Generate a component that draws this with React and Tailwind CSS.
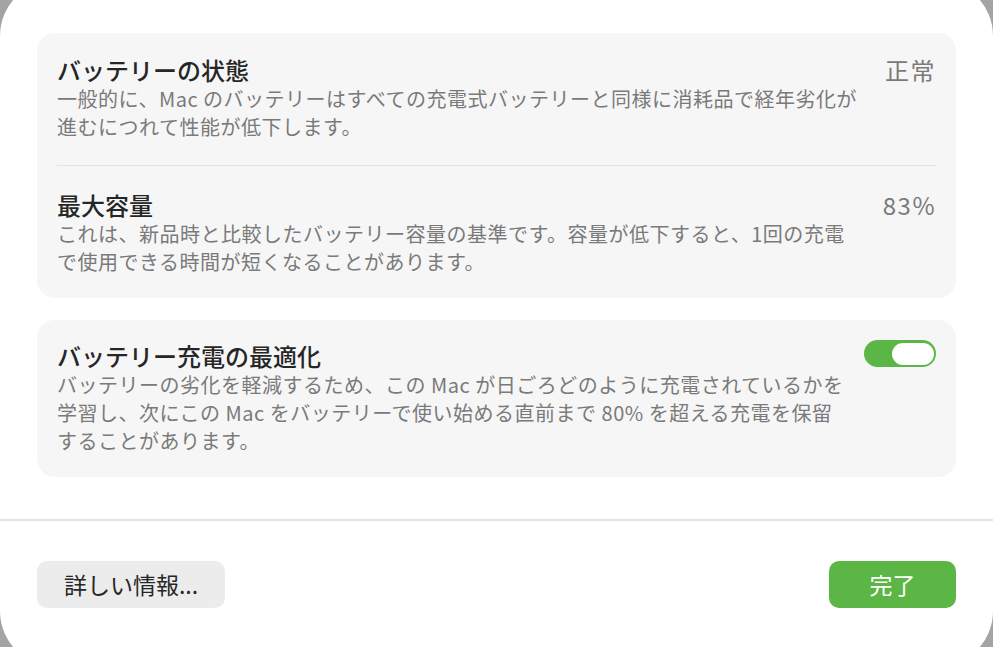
const font = { fontFamily: '"Noto Sans CJK JP", "Noto Sans", sans-serif' };

function Row({ title, value, lines, children }) {
  return (
    <div className="flex items-start justify-between">
      <div>
        <div className="text-[24px] leading-[30px] font-medium text-[#262626]">{title}</div>
        <div className="text-[20px] leading-[28px] tracking-[0.5px] text-[#7a7a7a] whitespace-nowrap">
          {lines.map((l, i) => (
            <div key={i}>{l}</div>
          ))}
        </div>
      </div>
      {value && <div className="text-[24px] leading-[30px] tracking-[1.5px] text-[#7a7a7a]">{value}</div>}
      {children}
    </div>
  );
}

function Toggle() {
  return (
    <div className="mt-[-1px] flex h-[27px] w-[72px] items-center justify-end rounded-full bg-[#5bb645] px-[2px]">
      <div className="h-[22px] w-[42px] rounded-full bg-white"></div>
    </div>
  );
}

export default function App() {
  return (
    <div className="h-[647px] w-[993px] overflow-hidden bg-[#a4a4a4]" style={font}>
      <div className="-mt-5 flex h-[687px] w-[993px] flex-col rounded-[56px] bg-white pt-[53px]">
        <div className="px-[37px]">
          {/* battery status */}
          <div className="rounded-[18px] bg-[#f6f6f6] px-5 pt-[22px] pb-[22px]">
            <Row
              title="バッテリーの状態"
              value="正常"
              lines={[
                '一般的に、Mac のバッテリーはすべての充電式バッテリーと同様に消耗品で経年劣化が',
                '進むにつれて性能が低下します。',
              ]}
            />
            <div className="mt-6 mb-6 h-px bg-[#e4e4e4]"></div>
            <Row
              title="最大容量"
              value="83%"
              lines={[
                'これは、新品時と比較したバッテリー容量の基準です。容量が低下すると、1回の充電',
                'で使用できる時間が短くなることがあります。',
              ]}
            />
          </div>

          {/* optimized charging */}
          <div className="mt-[22px] rounded-[18px] bg-[#f6f6f6] px-5 pt-[21px] pb-[22px]">
            <Row
              title="バッテリー充電の最適化"
              lines={[
                'バッテリーの劣化を軽減するため、この Mac が日ごろどのように充電されているかを',
                '学習し、次にこの Mac をバッテリーで使い始める直前まで 80% を超える充電を保留',
                'することがあります。',
              ]}
            >
              <Toggle />
            </Row>
          </div>
        </div>

        <div className="mt-[42px] h-[2px] bg-[#e2e2e2]"></div>

        <div className="mt-10 flex justify-between px-[37px]">
          <button className="h-[47px] w-[188px] rounded-[10px] bg-[#ececec] text-[23px] text-[#262626]">
            詳しい情報...
          </button>
          <button className="h-[47px] w-[127px] rounded-[10px] bg-[#5bb645] text-[23px] text-white">
            完了
          </button>
        </div>
      </div>
    </div>
  );
}
